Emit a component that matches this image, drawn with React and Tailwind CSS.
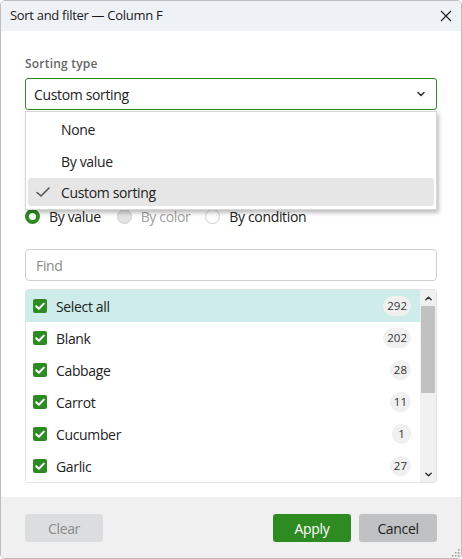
import React from "react";

const items = [
  { label: "Select all", count: 292, active: true },
  { label: "Blank", count: 202 },
  { label: "Cabbage", count: 28 },
  { label: "Carrot", count: 11 },
  { label: "Cucumber", count: 1 },
  { label: "Garlic", count: 27 },
];

function Check({ className = "" }) {
  return (
    <svg viewBox="0 0 14 14" className={className}>
      <path d="M3.2 7.2 L5.9 9.8 L10.8 4.6" fill="none" stroke="white" strokeWidth="2" strokeLinecap="round" strokeLinejoin="round" />
    </svg>
  );
}

export default function App() {
  return (
    <div className="w-[462px] h-[559px] bg-white" style={{ fontFamily: '"Open Sans", "Noto Sans", sans-serif' }}>
      <div className="w-full h-full border border-[#bdbdbd] rounded-[5px] flex flex-col overflow-hidden">
        {/* Title bar */}
        <div className="h-[30px] bg-[#eef2f6] flex items-center justify-between pl-[9px] pr-[9px] shrink-0">
          <span className="text-[13px] text-[#1a1a1a] tracking-[-0.3px]">Sort and filter — Column F</span>
          <svg viewBox="0 0 12 12" className="w-[12px] h-[12px]">
            <path d="M1 1 L11 11 M11 1 L1 11" stroke="#222" strokeWidth="1.2" fill="none" />
          </svg>
        </div>

        {/* Body */}
        <div className="flex-1 bg-white px-[24px] pt-[25px] flex flex-col">
          <div className="text-[12px] font-semibold text-[#666] leading-[16px] tracking-[0.2px]">Sorting type</div>
          <div className="relative mt-[6px]">
            <div className="h-[32px] border border-[#2e8b22] rounded-[3px] flex items-center justify-between pl-[8px] pr-[10px]">
              <span className="text-[14px] text-[#222] tracking-[-0.35px]">Custom sorting</span>
              <svg viewBox="0 0 10 10" className="w-[10px] h-[10px]">
                <path d="M2 3.5 L5 6.5 L8 3.5" stroke="#333" strokeWidth="1.6" fill="none" strokeLinecap="round" strokeLinejoin="round" />
              </svg>
            </div>
            <div className="absolute left-0 right-0 top-[33px] z-10 bg-white border border-[#d6d6d6] shadow-[2px_3px_4px_rgba(0,0,0,0.25)] px-[2px] pt-[1px] pb-[3px]">
              <div className="h-[32px] flex items-center pl-[33px] text-[14px] text-[#222] tracking-[-0.35px]">None</div>
              <div className="h-[32px] flex items-center pl-[33px] text-[14px] text-[#222] tracking-[-0.35px]">By value</div>
              <div className="h-[28px] flex items-center bg-[#e6e6e6] rounded-[3px] mt-[1px] text-[14px] text-[#222] tracking-[-0.35px]">
                <svg viewBox="0 0 16 16" className="w-[16px] h-[16px] ml-[7px] mr-[10px]">
                  <path d="M2 8.5 L6 12 L14 4" stroke="#555" strokeWidth="1.6" fill="none" strokeLinecap="round" strokeLinejoin="round" />
                </svg>
                Custom sorting
              </div>
            </div>
          </div>

          {/* Radio row */}
          <div className="mt-[98px] h-[16px] flex items-center text-[14px] tracking-[-0.35px]">
            <span className="w-[15px] h-[15px] rounded-full border-[4px] border-[#2e8b22] bg-white" />
            <span className="ml-[9px] text-[#222]">By value</span>
            <span className="ml-[16px] w-[15px] h-[15px] rounded-full border border-[#cfcfcf] bg-[#e3e3e3]" />
            <span className="ml-[9px] text-[#a0a0a0]">By color</span>
            <span className="ml-[15px] w-[15px] h-[15px] rounded-full border border-[#cfcfcf] bg-white" />
            <span className="ml-[9px] text-[#222]">By condition</span>
          </div>

          {/* Find */}
          <div className="mt-[25px] h-[32px] border border-[#cfcfcf] rounded-[4px] flex items-center pl-[10px] text-[14px] text-[#8a8a8a] tracking-[-0.35px]">
            Find
          </div>

          {/* List */}
          <div className="mt-[8px] h-[194px] border border-[#e2e2e2] rounded-[3px] flex overflow-hidden">
            <div className="flex-1 flex flex-col">
              {items.map((it) => (
                <div key={it.label} className={`h-[32px] shrink-0 flex items-center pl-[7px] pr-[9px] ${it.active ? "bg-[#cdecea]" : "bg-white"}`}>
                  <span className="w-[14px] h-[14px] rounded-[2px] bg-[#2e8b22] flex items-center justify-center">
                    <Check className="w-[14px] h-[14px]" />
                  </span>
                  <span className="ml-[9px] text-[14px] text-[#222] tracking-[-0.35px] flex-1">{it.label}</span>
                  <span className="h-[20px] min-w-[19px] px-[4px] rounded-full bg-[#f0f0f0] text-[11.5px] text-[#333] flex items-center justify-center">
                    {it.count}
                  </span>
                </div>
              ))}
            </div>
            <div className="w-[16px] bg-[#f0f0f0] flex flex-col">
              <div className="h-[16px] flex items-center justify-center">
                <svg viewBox="0 0 10 10" className="w-[9px] h-[9px]">
                  <path d="M2 6.5 L5 3.5 L8 6.5" stroke="#333" strokeWidth="1.6" fill="none" strokeLinecap="round" strokeLinejoin="round" />
                </svg>
              </div>
              <div className="h-[87px] mx-[1px] bg-[#c1c1c1]" />
              <div className="flex-1" />
              <div className="h-[16px] flex items-center justify-center">
                <svg viewBox="0 0 10 10" className="w-[9px] h-[9px]">
                  <path d="M2 3.5 L5 6.5 L8 3.5" stroke="#333" strokeWidth="1.6" fill="none" strokeLinecap="round" strokeLinejoin="round" />
                </svg>
              </div>
            </div>
          </div>
        </div>

        {/* Footer */}
        <div className="relative h-[61px] shrink-0 bg-[#f0f0f0] flex items-start pt-[17px] px-[24px]">
          <button className="w-[78px] h-[28px] rounded-[3px] bg-[#dcdddf] text-[14px] text-[#8a8a8a] tracking-[-0.35px]">Clear</button>
          <div className="flex-1" />
          <button className="w-[78px] h-[28px] rounded-[3px] bg-[#2e8b22] text-[14px] text-white tracking-[-0.35px]">Apply</button>
          <button className="ml-[8px] w-[78px] h-[28px] rounded-[3px] bg-[#c0c1c3] text-[14px] text-[#222] tracking-[-0.35px]">Cancel</button>
          <svg viewBox="0 0 8 8" className="absolute right-[1px] bottom-[1px] w-[8px] h-[8px]">
            <rect x="6" y="0" width="1.5" height="1.5" fill="#999" />
            <rect x="3" y="3" width="1.5" height="1.5" fill="#999" />
            <rect x="6" y="3" width="1.5" height="1.5" fill="#999" />
            <rect x="0" y="6" width="1.5" height="1.5" fill="#999" />
            <rect x="3" y="6" width="1.5" height="1.5" fill="#999" />
            <rect x="6" y="6" width="1.5" height="1.5" fill="#999" />
          </svg>
        </div>
      </div>
    </div>
  );
}
